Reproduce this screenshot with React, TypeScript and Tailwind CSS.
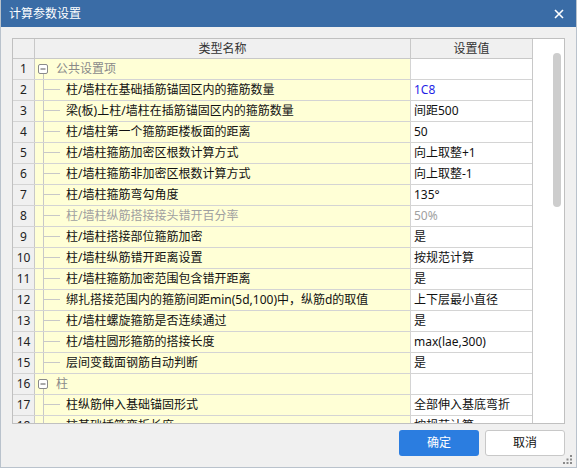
import React from 'react';

type Row = {
  name: string;
  value?: string;
  group?: boolean;
  tone?: 'blue' | 'gray';
};

const rows: Row[] = [
  { name: '公共设置项', group: true },
  { name: '柱/墙柱在基础插筋锚固区内的箍筋数量', value: '1C8', tone: 'blue' },
  { name: '梁(板)上柱/墙柱在插筋锚固区内的箍筋数量', value: '间距500' },
  { name: '柱/墙柱第一个箍筋距楼板面的距离', value: '50' },
  { name: '柱/墙柱箍筋加密区根数计算方式', value: '向上取整+1' },
  { name: '柱/墙柱箍筋非加密区根数计算方式', value: '向上取整-1' },
  { name: '柱/墙柱箍筋弯勾角度', value: '135°' },
  { name: '柱/墙柱纵筋搭接接头错开百分率', value: '50%', tone: 'gray' },
  { name: '柱/墙柱搭接部位箍筋加密', value: '是' },
  { name: '柱/墙柱纵筋错开距离设置', value: '按规范计算' },
  { name: '柱/墙柱箍筋加密范围包含错开距离', value: '是' },
  { name: '绑扎搭接范围内的箍筋间距min(5d,100)中，纵筋d的取值', value: '上下层最小直径' },
  { name: '柱/墙柱螺旋箍筋是否连续通过', value: '是' },
  { name: '柱/墙柱圆形箍筋的搭接长度', value: 'max(lae,300)' },
  { name: '层间变截面钢筋自动判断', value: '是' },
  { name: '柱', group: true },
  { name: '柱纵筋伸入基础锚固形式', value: '全部伸入基底弯折' },
  { name: '柱基础插筋弯折长度', value: '按规范计算' },
];

function GroupMark() {
  return (
    <svg width="21" height="20" viewBox="0 0 21 20" className="shrink-0">
      <line x1="8.5" y1="15" x2="8.5" y2="20" stroke="#c4c4c4" />
      <rect x="3.5" y="5.5" width="9" height="9" rx="1.5" fill="#fff" stroke="#8a8a8a" />
      <line x1="5.5" y1="10" x2="10.5" y2="10" stroke="#555" />
    </svg>
  );
}

function ChildMark() {
  return (
    <svg width="31" height="20" viewBox="0 0 31 20" className="shrink-0">
      <line x1="8.5" y1="0" x2="8.5" y2="20" stroke="#c8c8c8" />
      <line x1="8" y1="9.5" x2="25" y2="9.5" stroke="#c8c8c8" />
    </svg>
  );
}

export default function App() {
  return (
    <div
      className="relative w-[577px] h-[468px] flex flex-col bg-[#f0f0f0] border-x border-b border-[#b9c2cc] overflow-hidden"
      style={{ fontFamily: '"Noto Sans", "Noto Sans CJK SC", sans-serif' }}
    >
      {/* title bar */}
      <div className="h-[27px] shrink-0 bg-[#3a6ca6] flex items-center justify-between pl-[8px] pr-[12px]">
        <span className="text-[12px] text-white">计算参数设置</span>
        <svg width="10" height="10" viewBox="0 0 10 10">
          <path d="M1 1 L9 9 M9 1 L1 9" stroke="#fff" strokeWidth="1.6" />
        </svg>
      </div>

      <div className="flex-1 flex flex-col pt-[11px] pl-[11px]">
        {/* grid */}
        <div className="w-[553px] h-[386px] border border-[#c0c0c0] flex overflow-hidden text-[12px]">
          <div className="w-[519px] flex flex-col shrink-0">
            <div className="h-[20px] shrink-0 flex border-b border-[#c8c8c8] bg-[#f0f0f0] text-[#333]">
              <div className="w-[22px] border-r border-[#c8c8c8]" />
              <div className="w-[376px] border-r border-[#c8c8c8] flex items-center justify-center">类型名称</div>
              <div className="flex-1 flex items-center justify-center">设置值</div>
            </div>
            {rows.map((r, i) => (
              <div key={i} className="h-[21px] shrink-0 flex border-b border-[#d4d4d4]">
                <div className="w-[22px] shrink-0 border-r border-[#c8c8c8] bg-[#f0f0f0] flex items-center justify-center text-[#222]">
                  {i + 1}
                </div>
                <div className="w-[376px] shrink-0 border-r border-[#d4d4d4] bg-[#ffffd6] flex items-center whitespace-nowrap overflow-hidden">
                  {r.group ? (
                    <>
                      <GroupMark />
                      <span className="text-[#8a8a8a]">{r.name}</span>
                    </>
                  ) : (
                    <>
                      <ChildMark />
                      <span className={r.tone === 'gray' ? 'text-[#a0a0a0]' : 'text-[#111]'}>{r.name}</span>
                    </>
                  )}
                </div>
                <div
                  className={
                    'flex-1 bg-white flex items-center pl-[3px] whitespace-nowrap overflow-hidden ' +
                    (r.tone === 'blue' ? 'text-[#1f1fe6]' : r.tone === 'gray' ? 'text-[#a0a0a0]' : 'text-[#111]')
                  }
                >
                  {r.value}
                </div>
              </div>
            ))}
          </div>
          {/* scrollbar column */}
          <div className="flex-1 bg-white border-l border-[#c8c8c8] pt-[14px] pl-[20px]">
            <div className="w-[8px] h-[154px] rounded-full bg-[#cdcdcd]" />
          </div>
        </div>

        {/* buttons */}
        <div className="w-[553px] flex justify-end gap-[6px] mt-[6px]">
          <button className="w-[80px] h-[26px] rounded-[3px] bg-[#2b7de0] text-white text-[12px]">确定</button>
          <button className="w-[80px] h-[26px] rounded-[3px] bg-white border border-[#c8c8c8] text-[#111] text-[12px]">
            取消
          </button>
        </div>
      </div>

      {/* resize grip */}
      <svg width="10" height="10" viewBox="0 0 10 10" className="absolute right-[3px] bottom-[2px]">
        <rect x="7" y="0" width="2" height="2" fill="#8a8a8a" />
        <rect x="3.5" y="3.5" width="2" height="2" fill="#8a8a8a" />
        <rect x="7" y="3.5" width="2" height="2" fill="#8a8a8a" />
        <rect x="0" y="7" width="2" height="2" fill="#8a8a8a" />
        <rect x="3.5" y="7" width="2" height="2" fill="#8a8a8a" />
        <rect x="7" y="7" width="2" height="2" fill="#8a8a8a" />
      </svg>
    </div>
  );
}
